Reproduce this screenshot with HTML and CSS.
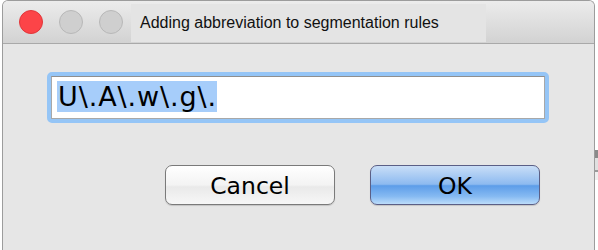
FILE: index.html
```html
<!DOCTYPE html>
<html>
<head>
<meta charset="utf-8">
<link rel="stylesheet" href="styles.css">
</head>
<body>
<div class="backdrop">
  <div class="window">
    <div class="titlebar">
      <div class="lights">
        <span class="light close"></span>
        <span class="light off"></span>
        <span class="light off"></span>
      </div>
      <div class="title">Adding abbreviation to segmentation rules</div>
    </div>
    <div class="content">
      <div class="field-ring">
        <div class="field"><span class="sel">U\.A\.w\.g\.</span></div>
      </div>
      <div class="buttons">
        <div class="btn cancel">Cancel</div>
        <div class="btn ok">OK</div>
      </div>
    </div>
  </div>
  <div class="edge">
    <span class="edge-mark"></span>
  </div>
</div>
</body>
</html>
```
FILE: styles.css
```css
html, body {
  margin: 0;
  padding: 0;
  background: #ffffff;
  width: 598px;
  height: 250px;
  overflow: hidden;
}
.backdrop {
  display: flex;
  height: 250px;
  padding-left: 2px;
  box-sizing: border-box;
}
.window {
  width: 593px;
  height: 252px;
  box-sizing: border-box;
  border: 1px solid #9c9c9c;
  border-bottom: none;
  border-radius: 6px 6px 0 0;
  background: #e6e6e6;
  display: flex;
  flex-direction: column;
  overflow: hidden;
  font-family: "Liberation Sans", Arial, sans-serif;
}
.titlebar {
  height: 43px;
  flex: none;
  box-sizing: border-box;
  background: linear-gradient(#ececec, #d2d2d2);
  border-bottom: 1px solid #a9a9a9;
  display: flex;
  align-items: stretch;
}
.lights {
  display: flex;
  align-items: center;
  gap: 16px;
  padding-left: 16px;
  width: 112px;
  flex: none;
}
.light {
  width: 24px;
  height: 24px;
  border-radius: 50%;
  box-sizing: border-box;
}
.light.close {
  background: #fc4448;
  border: 1px solid #e1363a;
}
.light.off {
  background: #cfcfcf;
  border: 1px solid #b8b8b8;
}
.title {
  margin-top: 3px;
  margin-bottom: 1px;
  width: 355px;
  background: #e4e4e4;
  font-size: 16px;
  color: #111;
  padding-left: 9px;
  display: flex;
  align-items: center;
  box-sizing: border-box;
}
.content {
  padding: 28px 0 0 44px;
}
.field-ring {
  width: 502px;
  height: 51px;
  box-sizing: border-box;
  border: 4px solid #95c5f6;
  border-radius: 5px;
  background: #95c5f6;
}
.field {
  height: 100%;
  box-sizing: border-box;
  background: #ffffff;
  border: 1px solid #a8a8a8;
  border-top-color: #8f8f8f;
  padding: 4px 0 0 5px;
}
.sel {
  display: inline-block;
  background: #a6cdfa;
  font-family: "DejaVu Sans", "Liberation Sans", sans-serif;
  font-size: 27px;
  line-height: 31px;
  color: #000;
  letter-spacing: 0.9px;
  padding-left: 1px;
}
.buttons {
  display: flex;
  gap: 35px;
  padding: 42px 0 0 118px;
}
.btn {
  width: 170px;
  height: 40px;
  box-sizing: border-box;
  border-radius: 7px;
  display: flex;
  align-items: center;
  justify-content: center;
  font-family: "DejaVu Sans", "Liberation Sans", sans-serif;
  font-size: 23.5px;
  color: #000;
  padding-top: 1px;
}
.cancel {
  border: 1px solid #7a7a7a;
  background: linear-gradient(#ffffff, #f3f3f3 50%, #e9e9e9 55%, #f7f7f7);
  box-shadow: 0 1px 1px rgba(0,0,0,0.15);
}
.ok {
  border: 1px solid #5b5f86;
  background: linear-gradient(#c9def7, #8dbaf0 48%, #5d9de9 52%, #86baf2 80%, #bcdcfa);
  box-shadow: 0 1px 1px rgba(0,0,0,0.15);
}
.edge {
  flex: 1;
  position: relative;
}
.edge-mark {
  position: absolute;
  left: 0;
  right: 0;
  top: 150px;
  height: 30px;
  background: linear-gradient(#8a8a8a 0 8px, #e0e0e0 8px 20px, #9a9a9a 20px 22px, #eeeeee 22px);
}
```
